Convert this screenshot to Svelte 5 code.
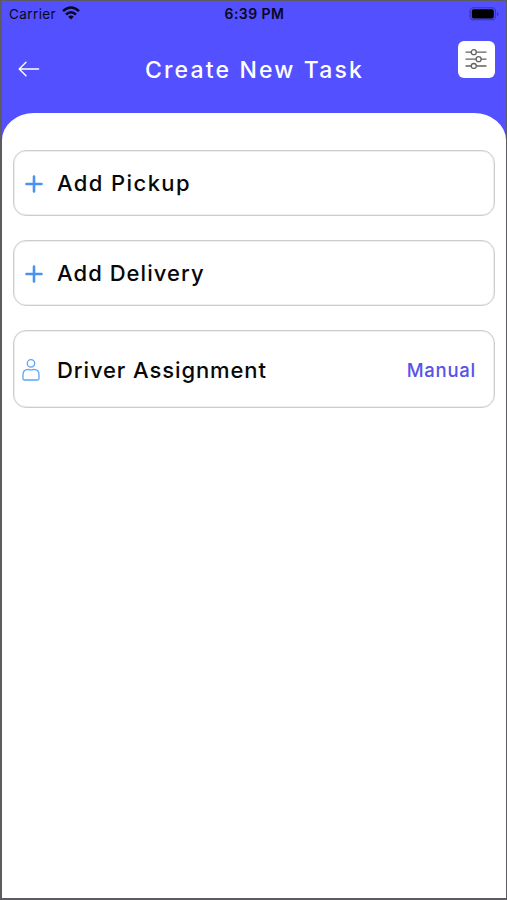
<script>
  const stops = ['Add Pickup', 'Add Delivery'];
</script>

<main class="screen">
  <header>
    <div class="status">
      <div class="carrier">
        <span>Carrier</span>
        <svg width="18" height="14" viewBox="0 0 18 14" fill="none" stroke="#080822" stroke-width="2.5">
          <path d="M1 5.2Q9-2.3 17 5.2" />
          <path d="M4 8.5Q9 4 14 8.5" />
          <path d="M6.2 10.8Q9 8.3 11.8 10.8L9 13.6Z" fill="#080822" stroke="none" />
        </svg>
      </div>
      <span class="time">6:39 PM</span>
      <svg class="battery" width="31" height="14" viewBox="0 0 31 14">
        <rect x="1" y=".8" width="25.5" height="12" rx="3.6" fill="none" stroke="#3836af" stroke-width="1.1" />
        <rect x="2.8" y="2.3" width="22" height="9.2" rx="2" fill="#000" />
        <path d="M28 5v4q1.6-.5 1.6-2T28 5Z" fill="#3836af" />
      </svg>
    </div>
    <div class="nav">
      <button class="back" aria-label="Back">
        <svg width="22" height="16" viewBox="0 0 22 16" fill="none" stroke="#fff" stroke-width="1.4" stroke-linecap="round" stroke-linejoin="round">
          <path d="M8 1.2 1.2 8 8 14.8M1.4 8H20.6" />
        </svg>
      </button>
      <h1>Create New Task</h1>
      <button class="filter" aria-label="Options">
        <svg width="22" height="20" viewBox="0 0 22 20" fill="#fff" stroke="#626262" stroke-width="1.3">
          <path d="M.5 3.2h21M.5 10.2h21M.5 17h21" />
          <circle cx="8.8" cy="3.2" r="2.5" />
          <circle cx="13.6" cy="10.2" r="2.5" />
          <circle cx="8.8" cy="17" r="2.5" />
        </svg>
      </button>
    </div>
  </header>
  <section>
    {#each stops as stop, i}
      <button class="card">
        <svg class="plus" width="18" height="18" viewBox="0 0 18 18" stroke="#4b91ef" stroke-width="2.6" stroke-linecap="round">
          <path d="M9 1.5v15M1.5 9h15" />
        </svg>
        <span class="label" class:delivery={i === 1}>{stop}</span>
      </button>
    {/each}
    <button class="card tall">
      <svg class="person" width="18" height="22" viewBox="0 0 18 22" fill="none" stroke="#5fa4f5" stroke-width="1.3">
        <circle cx="9" cy="4.4" r="3.7" />
        <path d="M1 19.5V16Q1 10.3 6.2 10.3 9 11.6 11.8 10.3 17 10.3 17 16V19.5Q17 21 15.5 21H2.5Q1 21 1 19.5Z" />
      </svg>
      <span class="label driver">Driver Assignment</span>
      <span class="mode">Manual</span>
    </button>
  </section>
</main>

<style>
  :global(body) { margin: 0; }
  .screen {
    box-sizing: border-box;
    width: 507px;
    height: 900px;
    border: solid #5c5c60;
    border-width: 1px 1px 2px 2px;
    background: #5350ff;
    display: flex;
    flex-direction: column;
    overflow: hidden;
    font-family: Inter, "Liberation Sans", sans-serif;
  }
  button { font: inherit; border: 0; padding: 0; margin: 0; background: none; text-align: left; }
  svg { display: block; flex: none; }
  header { height: 112px; flex: none; }
  .status {
    height: 26px;
    display: grid;
    grid-template-columns: 1fr auto 1fr;
    align-items: center;
    color: #080822;
    font-size: 13.5px;
    padding: 0 6px 0 7px;
  }
  .carrier { display: flex; align-items: center; gap: 6px; letter-spacing: .4px; }
  .carrier svg { margin-top: -2px; }
  .time { font-weight: 600; font-size: 14px; letter-spacing: .45px; margin-top: -2px; }
  .battery { justify-self: end; margin-top: -1px; }
  .nav {
    display: grid;
    grid-template-columns: 72px 1fr 72px;
    align-items: center;
    height: 84px;
  }
  .back { padding-left: 16px; }
  h1 {
    margin: 2px 0 0;
    color: #fff;
    text-align: center;
    font-size: 23px;
    font-weight: 500;
    letter-spacing: 2.15px;
    text-indent: 1px;
    white-space: nowrap;
  }
  .filter {
    width: 37px;
    height: 37px;
    border-radius: 6px;
    background: #fff;
    display: flex;
    align-items: center;
    justify-content: center;
    justify-self: end;
    margin: -20px 11px 0 0;
  }
  .filter svg { margin-left: -1px; }
  section {
    flex: 1;
    background: #fff;
    border-radius: 32px 32px 0 0 / 27px 27px 0 0;
    padding: 37px 11px 0;
    display: flex;
    flex-direction: column;
    gap: 24px;
  }
  .card {
    box-sizing: border-box;
    height: 66px;
    border: 1px solid #cdcdcd;
    box-shadow: inset 0 0 0 1px #eee;
    border-radius: 13px;
    display: flex;
    align-items: center;
    padding: 1px 17px 0 11px;
  }
  .card .label { margin-top: -2px; }
  .tall { height: 78px; padding: 2px 18px 0 8px; }
  .label {
    margin-left: 14px;
    color: #080808;
    font-size: 22px;
    font-weight: 500;
    letter-spacing: 1.4px;
    white-space: nowrap;
  }
  .delivery { letter-spacing: 1.05px; }
  .card .driver { margin: 0 0 0 17px; letter-spacing: .9px; }
  .mode {
    margin-left: auto;
    color: #5753e9;
    font-size: 18.5px;
    font-weight: 500;
    letter-spacing: .75px;
  }
</style>
